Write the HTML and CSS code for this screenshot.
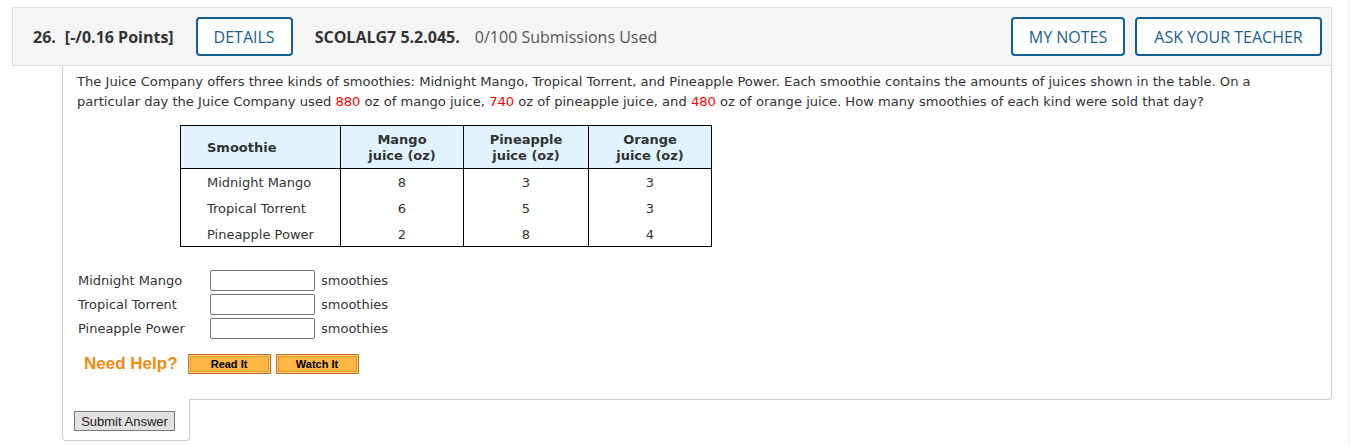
FILE: index.html
```html
<!DOCTYPE html>
<html lang="en">
<head>
<meta charset="utf-8">
<title>Question 26</title>
<link rel="stylesheet" href="styles.css">
</head>
<body>
<div class="page">
  <div class="question">
    <div class="q-header">
      <span class="q-num">26.</span>
      <span class="q-points">[-/0.16 Points]</span>
      <button class="hbtn details">DETAILS</button>
      <span class="q-code">SCOLALG7 5.2.045.</span>
      <span class="q-subs">0/100 Submissions Used</span>
      <span class="spacer"></span>
      <button class="hbtn notes">MY NOTES</button>
      <button class="hbtn ask">ASK YOUR TEACHER</button>
    </div>
    <div class="q-body">
      <p class="prompt">The Juice Company offers three kinds of smoothies: Midnight Mango, Tropical Torrent, and Pineapple Power. Each smoothie contains the amounts of juices shown in the table. On a particular day the Juice Company used <span class="red">880</span> oz of mango juice, <span class="red">740</span> oz of pineapple juice, and <span class="red">480</span> oz of orange juice. How many smoothies of each kind were sold that day?</p>
      <table class="juice">
        <colgroup>
          <col class="c1"><col class="c2"><col class="c3"><col class="c4">
        </colgroup>
        <thead>
          <tr>
            <th class="left">Smoothie</th>
            <th>Mango<br>juice (oz)</th>
            <th>Pineapple<br>juice (oz)</th>
            <th>Orange<br>juice (oz)</th>
          </tr>
        </thead>
        <tbody>
          <tr><td class="left">Midnight Mango</td><td>8</td><td>3</td><td>3</td></tr>
          <tr><td class="left">Tropical Torrent</td><td>6</td><td>5</td><td>3</td></tr>
          <tr><td class="left">Pineapple Power</td><td>2</td><td>8</td><td>4</td></tr>
        </tbody>
      </table>
      <div class="answers">
        <div class="arow"><span class="alabel">Midnight Mango</span><input class="ainput" type="text"><span class="unit">smoothies</span></div>
        <div class="arow"><span class="alabel">Tropical Torrent</span><input class="ainput" type="text"><span class="unit">smoothies</span></div>
        <div class="arow"><span class="alabel">Pineapple Power</span><input class="ainput" type="text"><span class="unit">smoothies</span></div>
      </div>
      <div class="help">
        <span class="need">Need Help?</span>
        <button class="obtn">Read It</button>
        <button class="obtn">Watch It</button>
      </div>
    </div>
    <div class="submit-tab">
      <button class="submit">Submit Answer</button>
    </div>
  </div>
</div>
</body>
</html>
```
FILE: styles.css
```css
html, body {
  margin: 0;
  padding: 0;
  background: #fff;
}
.page {
  width: 1349px;
  height: 446px;
  border-right: 1px solid #eeeeee;
  box-sizing: border-box;
  padding: 7px 0 0 12px;
}
.question {
  width: 1320px;
}
.q-header {
  height: 59px;
  box-sizing: border-box;
  border: 1px solid #dddddd;
  background: #f5f5f5;
  display: flex;
  align-items: center;
  padding: 0 9px 0 20px;
  font-family: "Open Sans", "Liberation Sans", sans-serif;
  font-size: 16px;
  color: #333;
}
.q-num {
  font-weight: 700;
  margin-right: 9px;
}
.q-points {
  font-weight: 700;
  margin-right: 22px;
}
.q-code {
  font-weight: 700;
  margin-left: 22px;
  margin-right: 15px;
}
.q-subs {
  color: #555;
}
.spacer {
  flex: 1;
}
.hbtn {
  height: 39px;
  box-sizing: border-box;
  border: 2px solid #135f93;
  border-radius: 4px;
  background: #fff;
  color: #1a5e8f;
  font-family: "Open Sans", "Liberation Sans", sans-serif;
  font-size: 16px;
  padding: 0;
  margin-left: 10px;
}
.hbtn.details {
  margin-left: 0;
  width: 97px;
}
.hbtn.notes {
  width: 114px;
}
.hbtn.ask {
  width: 187px;
}
.q-body {
  margin-left: 50px;
  border: 1px solid #cccccc;
  border-top: none;
  border-bottom-right-radius: 4px;
  height: 334px;
  box-sizing: border-box;
  padding: 6px 14px 0 14px;
  font-family: "DejaVu Sans", Verdana, sans-serif;
  font-size: 13px;
  color: #333;
}
.prompt {
  margin: 0;
  line-height: 20px;
  font-size: 13.1px;
  padding-right: 20px;
}
.red {
  color: #ff0000;
}
.juice {
  margin: 13px 0 0 103px;
  border-collapse: collapse;
  table-layout: fixed;
  width: 531px;
  border: 1px solid #000;
  font-size: 13px;
}
.c1 { width: 160px; }
.c2 { width: 123px; }
.c3 { width: 125px; }
.c4 { width: 123px; }
.juice th, .juice td {
  border-left: 1px solid #000;
  border-right: 1px solid #000;
  text-align: center;
}
.juice th {
  background: #e1f4fd;
  font-weight: 700;
  line-height: 16px;
  padding: 6px 4px 4px 4px;
  border-bottom: 1px solid #000;
}
.juice td {
  height: 26px;
  padding: 2px 4px 0 4px;
  box-sizing: border-box;
}
.juice .left {
  text-align: left;
  padding-left: 26px;
}
.answers {
  margin-top: 23px;
  display: flex;
  flex-direction: column;
  gap: 4px;
  padding-left: 1px;
}
.arow {
  display: flex;
  align-items: center;
  height: 20px;
}
.alabel {
  width: 132px;
}
.ainput {
  width: 105px;
  height: 21px;
  box-sizing: border-box;
  border: 1px solid #767676;
  border-radius: 2px;
  margin: 0 6px 0 0;
  padding: 0;
}
.unit {
  color: #333;
}
.help {
  margin-top: 16px;
  display: flex;
  align-items: center;
  padding-left: 7px;
}
.need {
  font-family: Arial, "Liberation Sans", sans-serif;
  font-weight: 700;
  font-size: 17px;
  color: #f28a10;
  margin-right: 10px;
}
.obtn {
  width: 83px;
  height: 20px;
  box-sizing: border-box;
  background: #fcb644;
  border: 1px solid #c26c1f;
  box-shadow: inset 0 0 0 1px #fdd38a, inset 0 0 0 2px #e9962d;
  font-family: Arial, "Liberation Sans", sans-serif;
  font-weight: 700;
  font-size: 11px;
  color: #000;
  padding: 0;
  margin-right: 5px;
}
.submit-tab {
  margin-left: 50px;
  margin-top: -1px;
  width: 128px;
  height: 42px;
  box-sizing: border-box;
  border: 1px solid #cccccc;
  border-top: none;
  border-radius: 0 0 4px 4px;
  background: #fff;
  position: relative;
  padding: 12px 0 0 11px;
}
.submit {
  width: 101px;
  height: 20px;
  box-sizing: border-box;
  background: #e1e1e1;
  border: 1px solid #777;
  font-family: Arial, "Liberation Sans", sans-serif;
  font-size: 13px;
  color: #222;
  padding: 0;
}
```
